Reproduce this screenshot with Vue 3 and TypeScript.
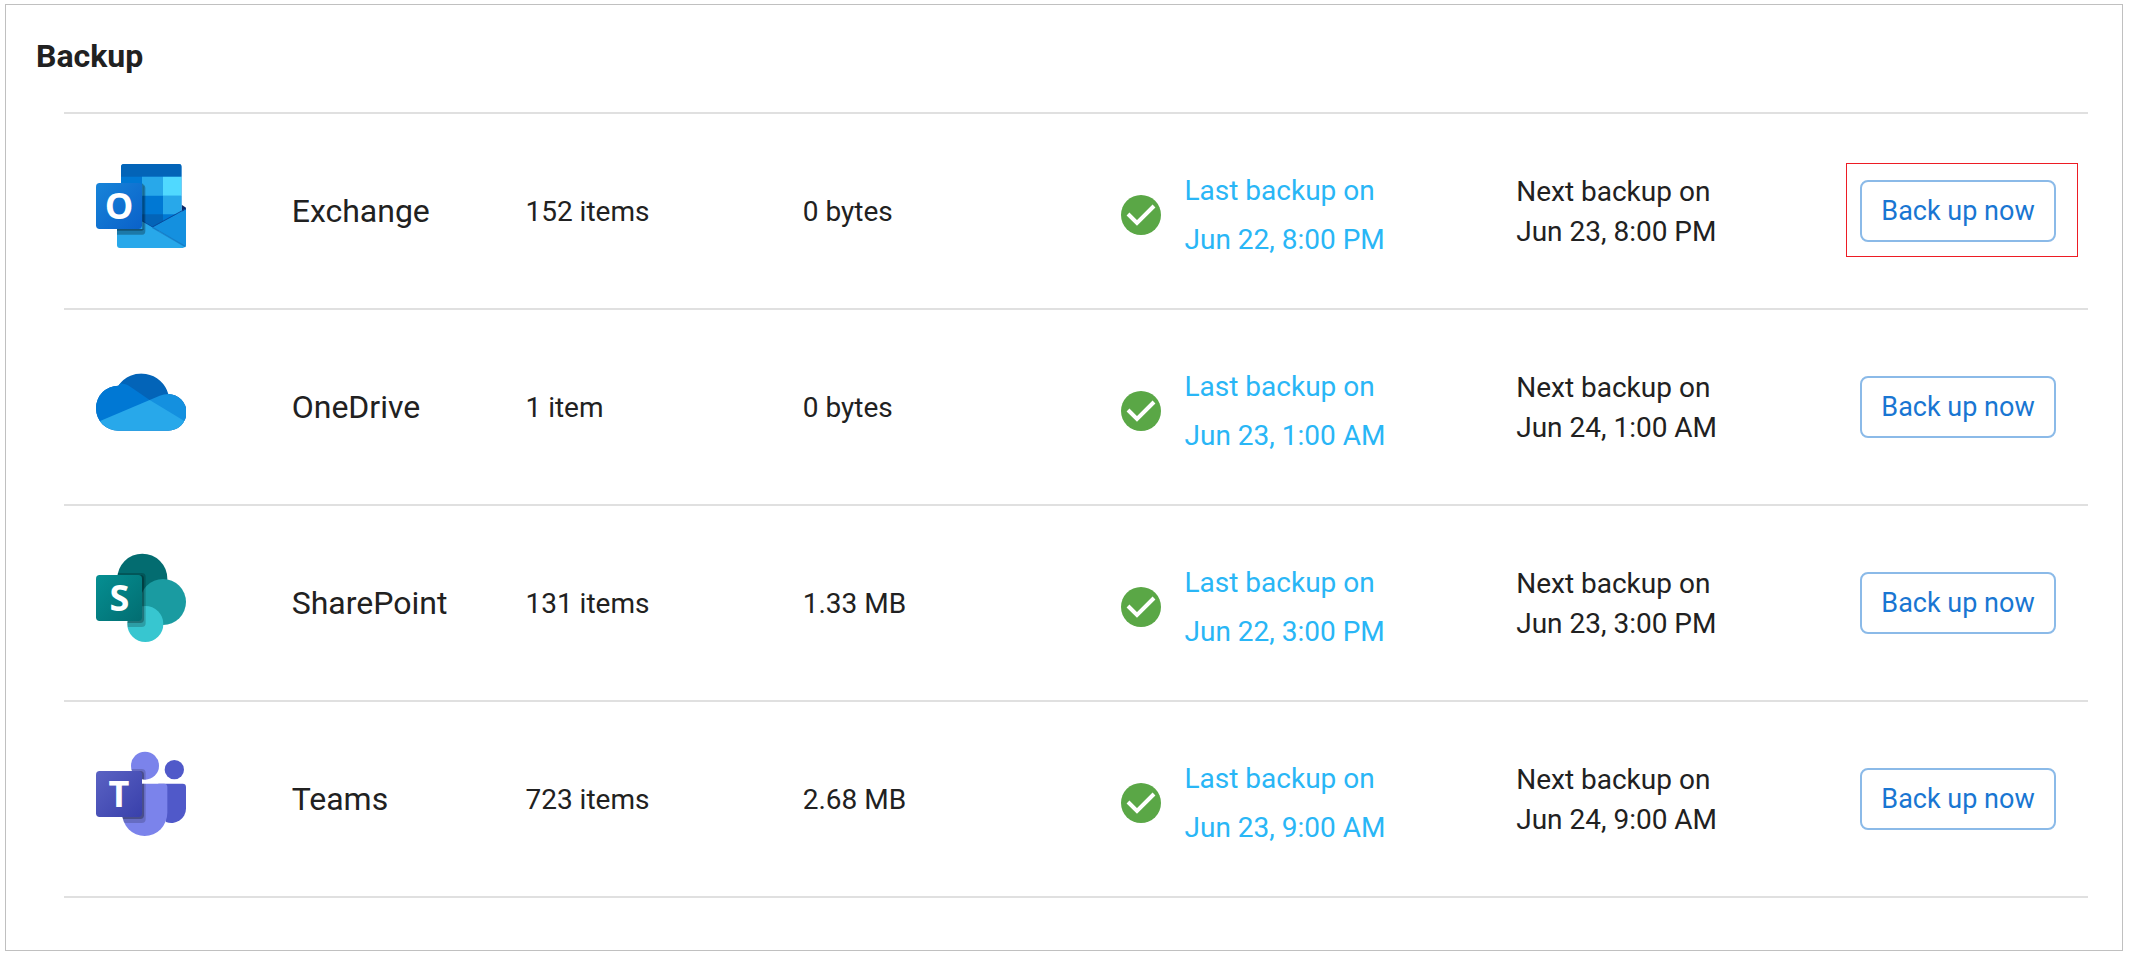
<script setup lang="ts">
type Service = 'exchange' | 'onedrive' | 'sharepoint' | 'teams'

interface BackupRow {
  id: Service
  name: string
  items: string
  size: string
  last: string
  next: string
  highlighted?: boolean
}

const rows: BackupRow[] = [
  { id: 'exchange', name: 'Exchange', items: '152 items', size: '0 bytes', last: 'Jun 22, 8:00 PM', next: 'Jun 23, 8:00 PM', highlighted: true },
  { id: 'onedrive', name: 'OneDrive', items: '1 item', size: '0 bytes', last: 'Jun 23, 1:00 AM', next: 'Jun 24, 1:00 AM' },
  { id: 'sharepoint', name: 'SharePoint', items: '131 items', size: '1.33 MB', last: 'Jun 22, 3:00 PM', next: 'Jun 23, 3:00 PM' },
  { id: 'teams', name: 'Teams', items: '723 items', size: '2.68 MB', last: 'Jun 23, 9:00 AM', next: 'Jun 24, 9:00 AM' },
]
</script>

<template>
  <section class="panel" aria-labelledby="backup-title">
    <h2 id="backup-title" class="title">Backup</h2>
    <table class="services">
      <colgroup>
        <col class="col-icon" />
        <col class="col-name" />
        <col class="col-items" />
        <col class="col-size" />
        <col class="col-last" />
        <col class="col-next" />
        <col class="col-action" />
      </colgroup>
      <tbody>
        <tr v-for="row in rows" :key="row.id">
          <td class="icon-cell">
            <svg v-if="row.id === 'exchange'" class="logo" viewBox="48 33 270 270" aria-hidden="true">
              <defs>
                <linearGradient id="ex-tile" x1="0" y1="0" x2="1" y2="1">
                  <stop offset="0" stop-color="#1784d9" />
                  <stop offset="1" stop-color="#0a61c9" />
                </linearGradient>
                <clipPath id="ex-book"><rect x="123" y="42" width="182" height="200" rx="9" /></clipPath>
                <clipPath id="ex-mail"><rect x="111" y="160" width="207" height="134" rx="9" /></clipPath>
              </defs>
              <path d="M305 164l13 9v14l-13 10z" fill="#0a2767" />
              <g clip-path="url(#ex-book)">
                <path d="M123 42h182v200H123z" fill="#0078d4" />
                <path d="M123 42h182v38H123z" fill="#0364b8" />
                <path d="M186 80h63v57h-63zM249 137h56v60h-56z" fill="#28a8ea" />
                <path d="M249 80h56v57h-56z" fill="#50d9ff" />
                <path d="M186 193h63v50h-63z" fill="#0364b8" />
                <path d="M249 193h56v50h-56z" fill="#0078d4" />
              </g>
              <g clip-path="url(#ex-mail)">
                <path d="M318 178l-101 54 101 62z" fill="#1490df" />
                <path d="M318 176l-101 55-31-18" stroke="#0a4a9c" stroke-width="3" fill="none" />
                <path d="M111 170l206 120-8 4H111z" fill="#28a8ea" />
                <path d="M217 232l99 58" stroke="#1273bd" stroke-width="4" opacity=".7" fill="none" />
              </g>
              <path d="M111 237h77q3 0 3-3v-130q5 3 5 9v130q0 11-9 11h-76z" fill="#000" opacity=".28" />
              <path d="M186 100q6 3 6 10v124q0 8-8 8h-73v-5h75z" fill="#000" opacity=".3" />
              <rect x="48" y="99" width="138" height="138" rx="11" fill="url(#ex-tile)" />
              <text class="logo-letter" x="117" y="207" text-anchor="middle">O</text>
            </svg>

            <svg v-else-if="row.id === 'onedrive'" class="logo" viewBox="48 21 270 270" aria-hidden="true">
              <defs>
                <clipPath id="od-cloud">
                  <path d="M115 242A67 67 0 0 1 48 175A67 67 0 0 1 115 107A84 84 0 0 1 265 132A55 55 0 0 1 264 242Z" />
                </clipPath>
              </defs>
              <g clip-path="url(#od-cloud)">
                <path d="M48 60h270v190H48z" fill="#0364b8" />
                <path d="M40 100h75q20 0 36 10l58 40-30 60-119 20H40z" fill="#0078d4" />
                <path d="M209 150l30-13q12-5 27-5h60v90l-20-7-97-60z" fill="#1490df" />
                <path d="M48 218L209 150l109 66v30H48z" fill="#28a8ea" />
              </g>
            </svg>

            <svg v-else-if="row.id === 'sharepoint'" class="logo" viewBox="48 39 270 270" aria-hidden="true">
              <defs>
                <linearGradient id="sp-tile" x1="0" y1="0" x2="1" y2="1">
                  <stop offset="0" stop-color="#058f92" />
                  <stop offset="1" stop-color="#026d71" />
                </linearGradient>
                <clipPath id="sp-circles">
                  <circle cx="187" cy="116" r="75" />
                  <circle cx="249" cy="186" r="69" />
                  <circle cx="196" cy="252" r="54" />
                </clipPath>
              </defs>
              <circle cx="187" cy="116" r="75" fill="#036c70" />
              <circle cx="249" cy="186" r="69" fill="#1a9ba1" />
              <circle cx="196" cy="252" r="54" fill="#37c6d0" />
              <g clip-path="url(#sp-circles)">
                <rect x="48" y="99" width="149" height="162" rx="12" fill="#000" opacity=".2" />
                <rect x="48" y="105" width="144" height="144" rx="11" fill="#000" opacity=".26" />
              </g>
              <rect x="48" y="105" width="138" height="138" rx="11" fill="url(#sp-tile)" />
              <text class="logo-letter" x="118" y="213" text-anchor="middle">S</text>
            </svg>

            <svg v-else class="logo" viewBox="48 27 270 270" aria-hidden="true">
              <defs>
                <linearGradient id="tm-tile" x1="0" y1="0" x2="1" y2="1">
                  <stop offset="0" stop-color="#5a62c3" />
                  <stop offset="1" stop-color="#3940ab" />
                </linearGradient>
                <clipPath id="tm-people">
                  <circle cx="195" cy="77" r="42" />
                  <path d="M126 131h126q10 0 10 10v77a68 70 0 0 1-136 0z" />
                </clipPath>
              </defs>
              <circle cx="283" cy="89" r="29" fill="#5059c9" />
              <path d="M235 131h73q10 0 10 10v65a44 44 0 0 1-60 40z" fill="#5059c9" />
              <circle cx="195" cy="77" r="42" fill="#7b83eb" />
              <path d="M126 131h126q10 0 10 10v77a68 70 0 0 1-136 0z" fill="#7b83eb" />
              <g clip-path="url(#tm-people)">
                <rect x="48" y="87" width="149" height="162" rx="12" fill="#000" opacity=".17" />
                <rect x="48" y="93" width="144" height="144" rx="11" fill="#000" opacity=".28" />
              </g>
              <rect x="48" y="93" width="138" height="138" rx="11" fill="url(#tm-tile)" />
              <text class="logo-letter" x="117" y="201" text-anchor="middle">T</text>
            </svg>
          </td>
          <th class="name" scope="row">{{ row.name }}</th>
          <td class="detail">{{ row.items }}</td>
          <td class="detail">{{ row.size }}</td>
          <td class="last-cell">
            <div class="status">
              <svg class="check" viewBox="0 0 40 40" role="img" aria-label="Succeeded">
                <circle cx="20" cy="20" r="20" fill="#5aa746" />
                <path d="M7 19l9 9L33 11" fill="none" stroke="#fff" stroke-width="4" />
              </svg>
              <a class="last" href="#">Last backup on<br />{{ row.last }}</a>
            </div>
          </td>
          <td class="detail">Next backup on<br />{{ row.next }}</td>
          <td class="action-cell">
            <span class="action" :class="{ highlighted: row.highlighted }">
              <button class="backup-button" type="button">Back up now</button>
            </span>
          </td>
        </tr>
      </tbody>
    </table>
  </section>
</template>

<style>
body {
  background: #fff;
}
</style>

<style scoped>
.panel {
  box-sizing: border-box;
  margin: 4px 6px 7px 5px;
  padding: 31px 34px 52px 58px;
  border: 1px solid #c0c0c0;
  color: #212121;
  font-family: Roboto, "Liberation Sans", sans-serif;
  font-size: 28px;
  line-height: 40px;
}
.title {
  margin: 0 0 36px -28px;
  font-size: 32px;
  line-height: 40px;
  font-weight: 700;
}
.services {
  width: 100%;
  table-layout: fixed;
  border-collapse: separate;
  border-spacing: 0;
  border-top: 2px solid #e0e0e0;
}
.col-icon { width: 11.25%; }
.col-name { width: 11.55%; }
.col-items { width: 13.7%; }
.col-size { width: 15.7%; }
.col-last { width: 19.55%; }
.col-next { width: 15.25%; }
.col-action { width: 13%; }
.services td,
.services th {
  box-sizing: border-box;
  height: 196px;
  padding: 0;
  border-bottom: 2px solid #e0e0e0;
  text-align: left;
  vertical-align: middle;
  white-space: nowrap;
}
.services .icon-cell {
  padding: 0 0 10px 32px;
}
.logo {
  display: block;
  width: 90px;
  height: 90px;
}
.logo-letter {
  fill: #fff;
  font-family: "Open Sans", "Noto Sans", sans-serif;
  font-size: 108px;
  font-weight: 700;
}
.services .name {
  font-size: 32px;
  font-weight: 400;
}
.services .detail {
  padding-top: 2px;
}
.services .last-cell {
  padding-top: 8px;
}
.status {
  display: flex;
  align-items: center;
  gap: 24px;
}
.check {
  flex: none;
  width: 40px;
  height: 40px;
}
.last {
  color: #29b6f6;
  line-height: 49px;
  text-decoration: none;
}
.services .action-cell {
  padding-right: 32px;
  text-align: right;
}
.action {
  position: relative;
  display: inline-block;
  vertical-align: middle;
}
.action.highlighted::after {
  content: "";
  position: absolute;
  inset: -17px -22px -15px -14px;
  border: 1px solid #ed1c24;
  pointer-events: none;
}
.backup-button {
  display: block;
  box-sizing: border-box;
  width: 196px;
  height: 62px;
  padding: 0;
  border: 2px solid #8bbae8;
  border-radius: 8px;
  background: transparent;
  color: #1976d2;
  font-family: inherit;
  font-size: 27px;
  line-height: 40px;
  cursor: pointer;
}
</style>
